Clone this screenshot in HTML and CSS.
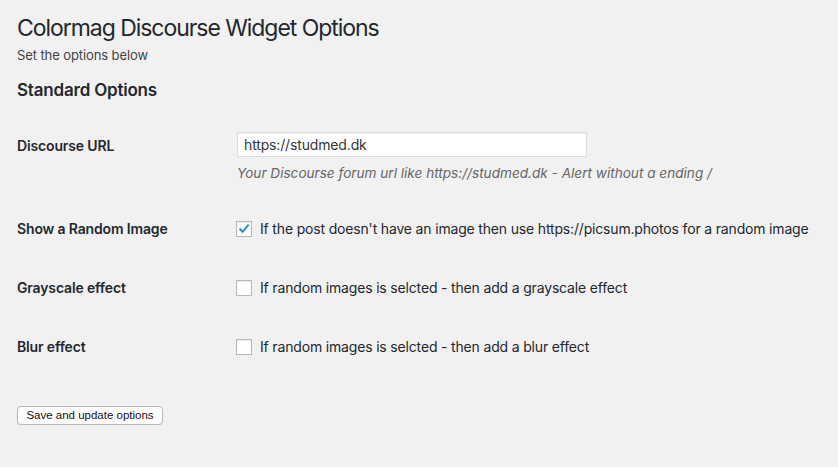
FILE: index.html
```html
<!DOCTYPE html>
<html>
<head>
<meta charset="utf-8">
<link rel="stylesheet" href="styles.css">
</head>
<body>
<div class="wrap">
  <h1 class="title">Colormag Discourse Widget Options</h1>
  <p class="intro">Set the options below</p>
  <h2 class="section">Standard Options</h2>
  <div class="form">
    <div class="row row-url">
      <div class="label">Discourse URL</div>
      <div class="field">
        <input class="text" type="text" value="https://studmed.dk">
        <p class="desc">Your Discourse forum url like https://studmed.dk - Alert without a ending /</p>
      </div>
    </div>
    <div class="row">
      <div class="label">Show a Random Image</div>
      <div class="field check">
        <span class="box checked"><svg viewBox="0 0 16 16" width="16" height="16"><path d="M3.6 8.2 L6.4 11.2 L12.6 3.8" fill="none" stroke="#1e8cbe" stroke-width="2.2" stroke-linecap="square"/></svg></span>
        <span>If the post doesn't have an image then use https://picsum.photos for a random image</span>
      </div>
    </div>
    <div class="row">
      <div class="label">Grayscale effect</div>
      <div class="field check">
        <span class="box"></span>
        <span>If random images is selcted - then add a grayscale effect</span>
      </div>
    </div>
    <div class="row">
      <div class="label">Blur effect</div>
      <div class="field check">
        <span class="box"></span>
        <span>If random images is selcted - then add a blur effect</span>
      </div>
    </div>
  </div>
  <button class="btn" type="button">Save and update options</button>
</div>
</body>
</html>
```

FILE: styles.css
```css
html, body {
  margin: 0;
  padding: 0;
  background: #f1f1f1;
}
body {
  font-family: Inter, "Noto Sans", "Liberation Sans", sans-serif;
  color: #23282d;
  font-size: 14px;
}
.wrap {
  padding: 13px 0 0 17px;
}
.title {
  margin: 0;
  font-size: 23px;
  font-weight: 400;
  line-height: 30px;
  letter-spacing: -1.05px;
}
.intro {
  margin: 3px 0 0;
  font-size: 13px;
  line-height: 18px;
  color: #444;
  letter-spacing: -0.1px;
}
.section {
  margin: 15px 0 0;
  font-size: 17px;
  font-weight: 600;
  line-height: 22px;
  letter-spacing: -0.2px;
}
.form {
  display: flex;
  flex-direction: column;
}
.row {
  display: flex;
  align-items: flex-start;
  padding: 19.5px 0;
  line-height: 20px;
}
.row-url {
  padding: 31px 0 17px;
}
.label {
  width: 220px;
  flex: none;
  font-weight: 600;
  font-size: 14px;
  letter-spacing: -0.15px;
}
.row-url .label {
  line-height: 27px;
}
.field {
  flex: none;
}
.text {
  display: block;
  box-sizing: border-box;
  width: 350px;
  height: 25px;
  margin: 0;
  padding: 0 6px;
  border: 1px solid #ddd;
  box-shadow: inset 0 1px 2px rgba(0,0,0,0.07);
  background: #fff;
  font-family: inherit;
  font-size: 14px;
  letter-spacing: -0.15px;
  color: #32373c;
  outline: none;
}
.desc {
  margin: 7px 0 0;
  font-size: 13.6px;
  line-height: 18px;
  font-style: italic;
  color: #666;
}
.check {
  display: flex;
  align-items: center;
  gap: 8px;
  margin-left: -1px;
  letter-spacing: -0.17px;
}
.box {
  box-sizing: border-box;
  width: 16px;
  height: 16px;
  border: 1px solid #b4b9be;
  background: #fff;
  box-shadow: inset 0 1px 2px rgba(0,0,0,0.1);
  display: inline-flex;
  align-items: center;
  justify-content: center;
  flex: none;
}
.box svg {
  display: block;
}
.btn {
  display: block;
  margin: 29.5px 0 0;
  height: 19px;
  width: 146px;
  padding: 0;
  border: 1px solid #b8b8b8;
  border-radius: 4px;
  background: #fff;
  font-family: "Liberation Sans", Arial, sans-serif;
  font-size: 11.5px;
  color: #111;
  line-height: 17px;
  box-shadow: 0 1px 1px rgba(0,0,0,0.08);
}
```
